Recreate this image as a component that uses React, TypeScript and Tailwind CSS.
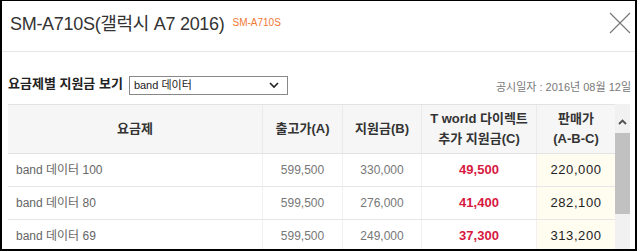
const rows = [
  { name: "band 데이터 100", a: "599,500", b: "330,000", c: "49,500", d: "220,000" },
  { name: "band 데이터 80", a: "599,500", b: "276,000", c: "41,400", d: "282,100" },
  { name: "band 데이터 69", a: "599,500", b: "249,000", c: "37,300", d: "313,200" },
];

const font = "font-['Liberation_Sans','Noto_Sans_CJK_KR',sans-serif]";

export default function App() {
  return (
    <div className={`w-[637px] h-[251px] overflow-hidden bg-white border-t border-x-2 border-b-2 border-black ${font}`}>
      <div className="h-[51px] border-b border-[#e6e6e6] flex items-center pl-2 pr-[4px]">
        <span className="text-[18px] text-[#333] tracking-[-0.3px] mb-1">SM-A710S(갤럭시 A7 2016)</span>
        <span className="ml-2 mb-2 text-[10px] text-[#f07835]">SM-A710S</span>
        <svg className="ml-auto mb-1.5" width="22" height="22" viewBox="0 0 22 22">
          <path d="M1 1 L21 21 M21 1 L1 21" stroke="#777" strokeWidth="1.1" fill="none" />
        </svg>
      </div>

      <div className="flex items-end pl-1.5 pr-1 h-[52px] pb-[9px]">
        <span className="text-[13px] font-bold text-[#222] mb-[2px] mr-1.5">요금제별 지원금 보기</span>
        <div className="w-[159px] h-[19px] border border-[#888] flex items-center pl-1 pr-2 text-[11px] text-[#222]">
          <span>band 데이터</span>
          <svg className="ml-auto" width="10" height="7" viewBox="0 0 10 7">
            <path d="M1 1 L5 5 L9 1" stroke="#222" strokeWidth="1.6" fill="none" />
          </svg>
        </div>
        <span className="ml-auto text-[11px] text-[#777]">공시일자 : 2016년 08월 12일</span>
      </div>

      <div className="flex pl-1.5 pr-[5px]">
        <div className="w-[607px] border-t border-[#e3e3e3]">
          <div className="flex h-[49px] bg-[#f6f6f6] border-b border-[#e3e3e3] text-[13px] font-bold text-[#333] text-center leading-[20px]">
            <div className="w-[255px] flex items-center justify-center border-r border-[#eaeaea]">요금제</div>
            <div className="w-[80px] flex items-center justify-center border-r border-[#eaeaea]">출고가(A)</div>
            <div className="w-[79px] flex items-center justify-center border-r border-[#eaeaea]">지원금(B)</div>
            <div className="w-[115px] flex items-center justify-center border-r border-[#eaeaea]">
              T world 다이렉트
              <br />
              추가 지원금(C)
            </div>
            <div className="w-[78px] flex items-center justify-center">
              판매가
              <br />
              (A-B-C)
            </div>
          </div>
          {rows.map((r) => (
            <div key={r.name} className="flex h-[33px] border-b border-[#e6e6e6] text-[12px] text-center">
              <div className="w-[255px] flex items-center pl-2 text-[#666] border-r border-[#f0f0f0]">{r.name}</div>
              <div className="w-[80px] flex items-center justify-center text-[#777] border-r border-[#f0f0f0]">{r.a}</div>
              <div className="w-[79px] flex items-center justify-center text-[#777] border-r border-[#f0f0f0]">{r.b}</div>
              <div className="w-[115px] flex items-center justify-center text-[13px] text-[#d7193f] font-bold border-r border-[#f0f0f0]">{r.c}</div>
              <div className="w-[78px] flex items-center justify-center text-[13px] text-[#222] bg-[#fffcf0] tracking-[0.6px]">{r.d}</div>
            </div>
          ))}
        </div>
        <div className="w-[15px] bg-[#f1f1f1] flex flex-col items-center pt-[15px]">
          <svg width="9" height="6" viewBox="0 0 9 6">
            <path d="M1 5 L4.5 1.5 L8 5" stroke="#505050" strokeWidth="1.8" fill="none" />
          </svg>
          <div className="mt-[8px] w-[15px] h-[81px] bg-[#c1c1c1]" />
        </div>
      </div>
    </div>
  );
}
